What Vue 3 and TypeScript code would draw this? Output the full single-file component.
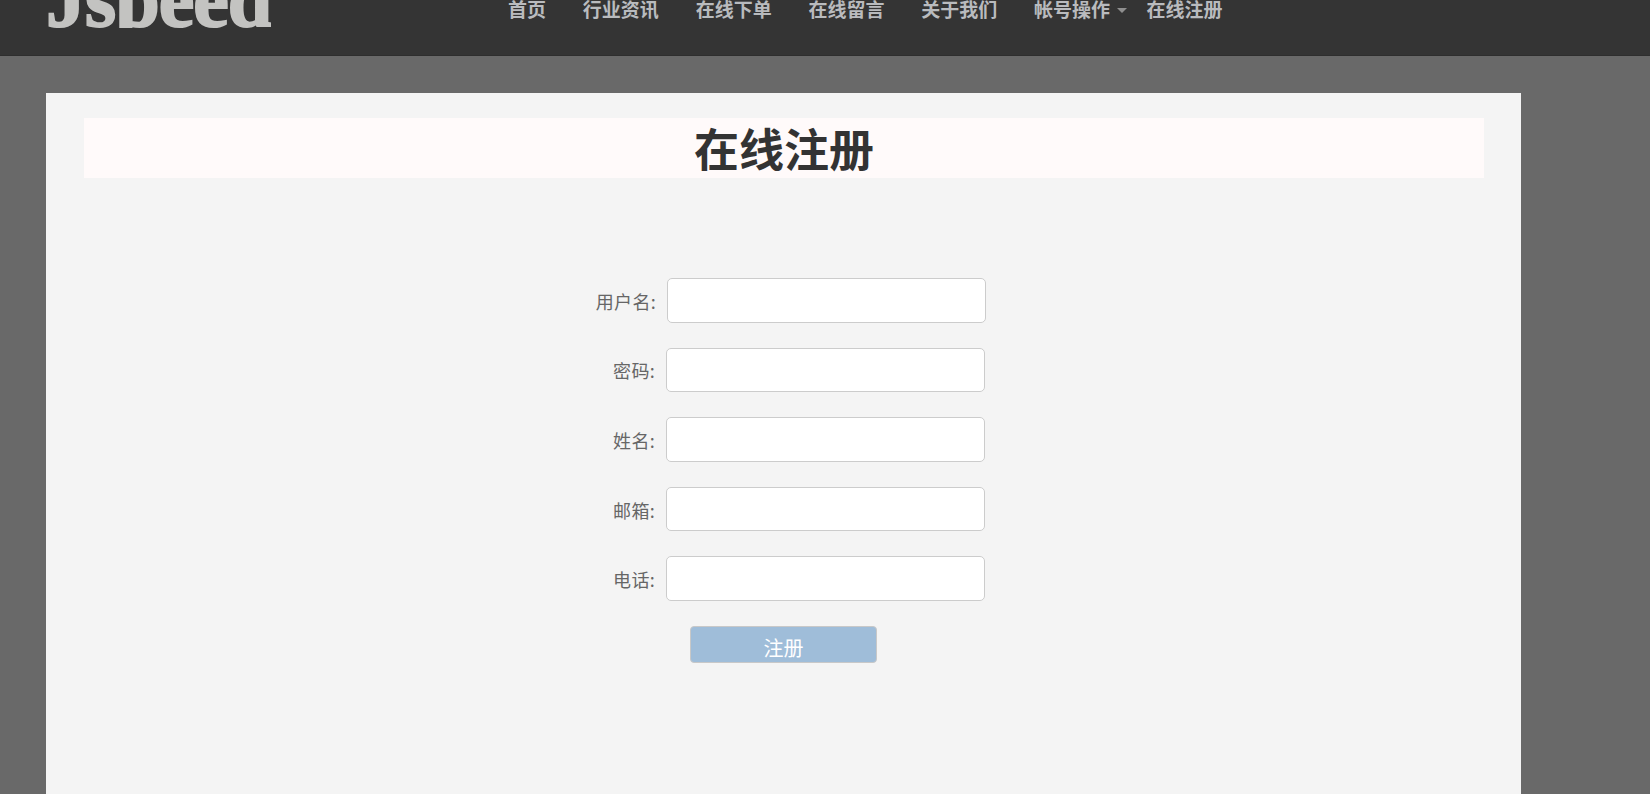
<script setup lang="ts">
const navItems: { label: string; caret?: boolean }[] = [
  { label: '首页' },
  { label: '行业资讯' },
  { label: '在线下单' },
  { label: '在线留言' },
  { label: '关于我们' },
  { label: '帐号操作', caret: true },
  { label: '在线注册' },
]
const fields: { label: string; type: string }[] = [
  { label: '用户名:', type: 'text' },
  { label: '密码:', type: 'password' },
  { label: '姓名:', type: 'text' },
  { label: '邮箱:', type: 'email' },
  { label: '电话:', type: 'tel' },
]
</script>

<template>
  <div class="page">
    <header class="topbar">
      <a class="logo">Jspeed</a>
      <nav class="nav">
        <a v-for="item in navItems" :key="item.label" class="nav-item" :class="{ 'has-caret': item.caret }">
          {{ item.label }}<span v-if="item.caret" class="caret"></span>
        </a>
      </nav>
    </header>
    <main class="panel">
      <h1 class="title">在线注册</h1>
      <form class="form" @submit.prevent>
        <div v-for="(f, i) in fields" :key="f.label" class="row" :class="{ first: i === 0 }">
          <label class="label">{{ f.label }}</label>
          <input class="input" :type="f.type" />
        </div>
        <button class="submit" type="submit">注册</button>
      </form>
    </main>
  </div>
</template>

<style>
html, body { margin: 0; background: #696969; overflow: hidden; }
</style>

<style scoped>
.page {
  height: 794px;
  overflow: hidden;
  background: #696969;
  font-family: "Noto Sans CJK SC", "Liberation Sans", sans-serif;
}
.topbar {
  height: 56px;
  box-sizing: border-box;
  background: #343434;
  border-bottom: 1px solid #2e2e2e;
  display: flex;
  overflow: hidden;
}
.logo {
  margin-left: 46px;
  margin-top: -41px;
  width: 225px;
  height: 69px;
  overflow: hidden;
  font-family: "Liberation Serif", serif;
  font-weight: 700;
  font-size: 80px;
  line-height: 80px;
  letter-spacing: -1px;
  color: #c3c3c1;
  -webkit-text-stroke: 2px #c3c3c1;
  white-space: nowrap;
}
.nav {
  display: flex;
  margin-left: 237px;
  margin-top: -5px;
  height: 28px;
}
.nav-item {
  font-size: 19px;
  line-height: 28px;
  font-weight: 700;
  color: #b9bbbe;
  margin-right: 36.8px;
  white-space: nowrap;
  display: flex;
  align-items: center;
}
.nav-item.has-caret { margin-right: 19.5px; }
.caret {
  width: 0;
  height: 0;
  margin-left: 7px;
  margin-top: 3px;
  border-left: 5px solid transparent;
  border-right: 5px solid transparent;
  border-top: 5px solid #8f8f8f;
}
.panel {
  width: 1475px;
  box-sizing: border-box;
  margin: 37px 0 0 46px;
  height: 701px;
  padding: 25px 37px 0 38px;
  background: #f4f4f4;
}
.title {
  margin: 0;
  height: 60px;
  background: #fffafa;
  text-align: center;
  font-size: 45px;
  line-height: 60px;
  font-weight: 700;
  color: #333;
}
.form {
  display: flex;
  flex-direction: column;
  align-items: flex-start;
  padding: 100px 0 0 463px;
  gap: 25px;
}
.row {
  display: flex;
  align-items: center;
  height: 44.6px;
}
.row.first { margin-left: 1px; }
.label {
  width: 108px;
  margin-right: 11px;
  text-align: right;
  font-size: 18px;
  letter-spacing: 0.3px;
  line-height: 26px;
  color: #666;
  padding-top: 1px;
}
.input {
  width: 319px;
  height: 100%;
  box-sizing: border-box;
  border: 1px solid #ccc;
  border-radius: 5px;
  background: #fff;
  outline: none;
  padding: 0 10px;
}
.submit {
  width: 187px;
  height: 37px;
  margin-left: 143px;
  box-sizing: border-box;
  border: 1px solid #c8c8c8;
  border-radius: 4px;
  background: #9fbdd9;
  color: #fff;
  font-family: inherit;
  font-size: 20px;
  line-height: 26px;
  padding: 8px 0 0;
}
</style>
